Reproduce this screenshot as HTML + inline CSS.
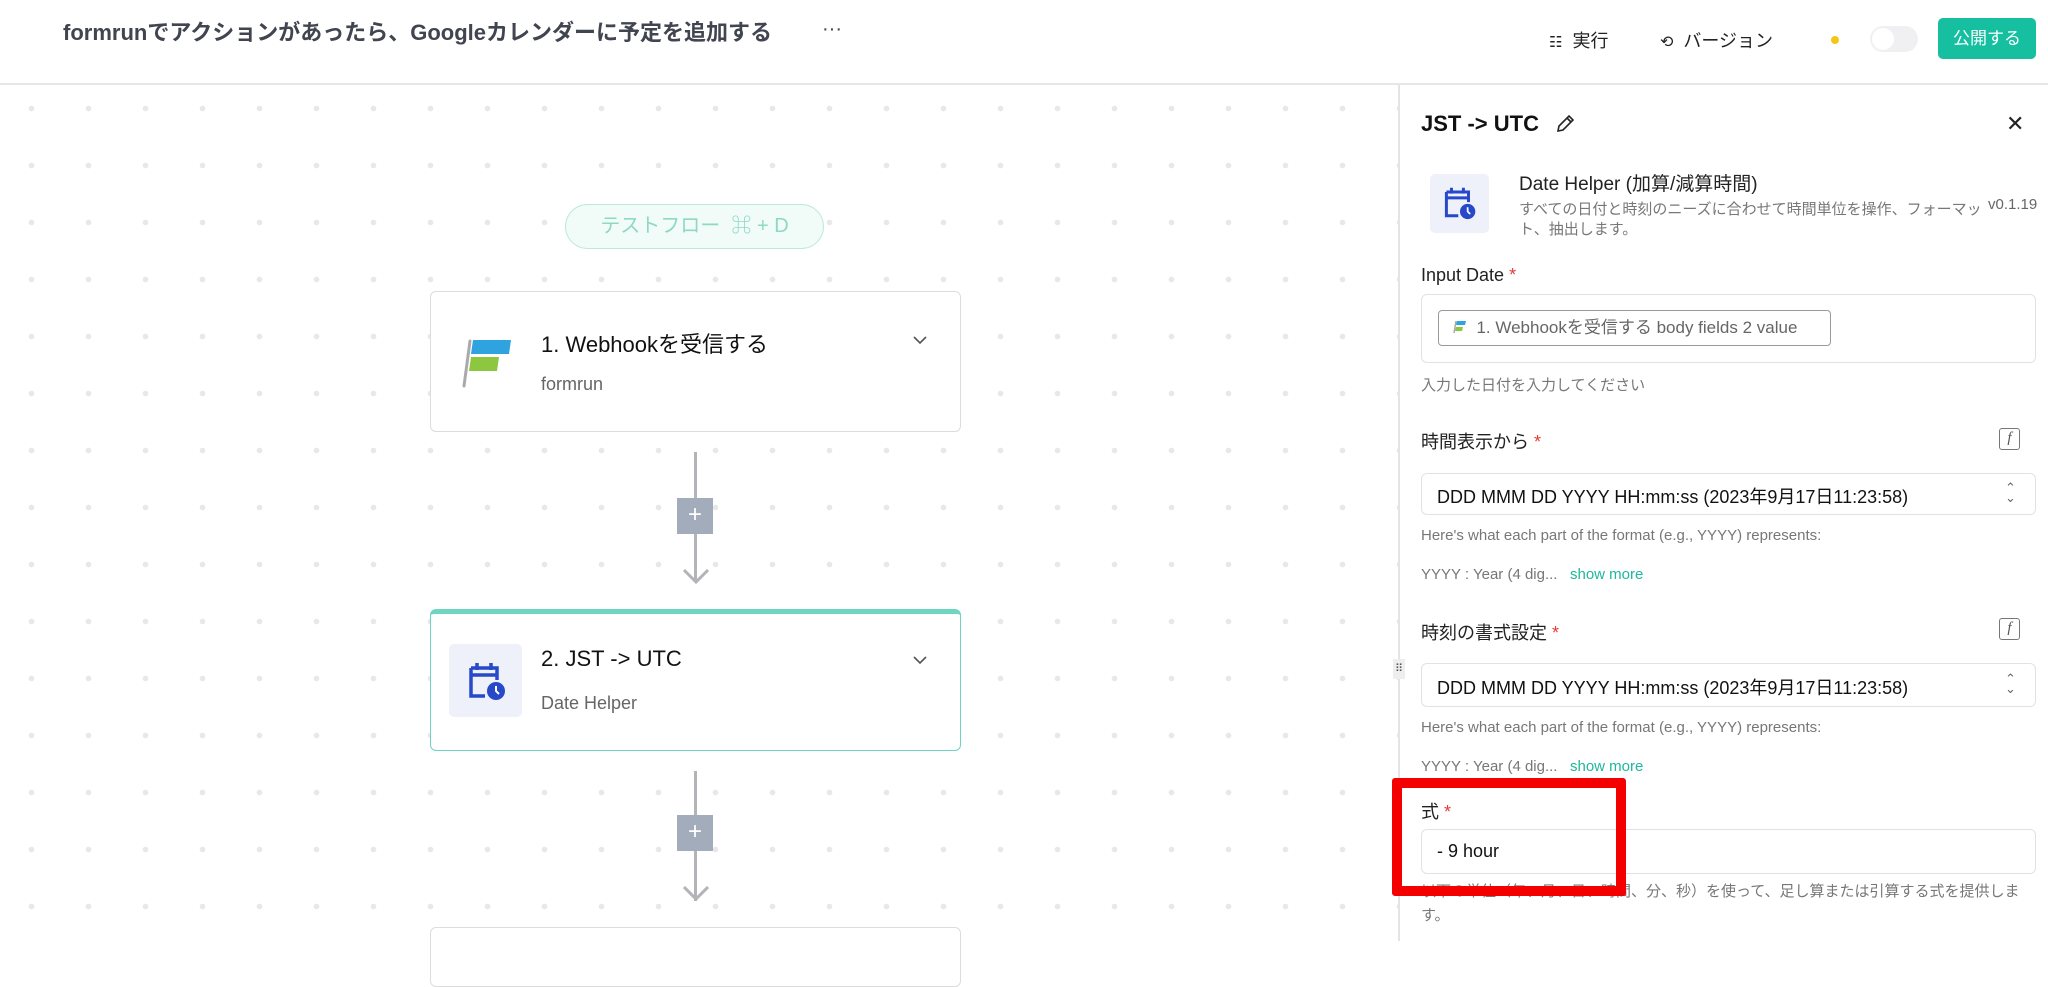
<!DOCTYPE html>
<html><head><meta charset="utf-8"><style>
*{box-sizing:border-box;margin:0;padding:0}
body{width:2048px;height:941px;overflow:hidden;background:#fff;font-family:"Liberation Sans","Noto Sans CJK JP",sans-serif;position:relative;color:#222}
.a{position:absolute;white-space:nowrap}
#canvas{position:absolute;left:0;top:85px;width:1399px;height:856px;background-color:#fff;background-image:radial-gradient(circle,#e8e8e8 2.6px,transparent 3px);background-size:57px 57px;background-position:3px -5px}
.card{position:absolute;left:430px;width:531px;background:#fff;border:1.5px solid #dcdcdc;border-radius:6px}
.req{color:#e53935}
.lbl{font-size:18px;color:#222}
.box{position:absolute;left:1421px;width:615px;border:1.5px solid #e2e2e2;border-radius:6px;background:#fff}
.help{font-size:15px;color:#777}
.sm{color:#1fb89a}
.fi{position:absolute;left:1999px;width:21px;height:22px;border:1.5px solid #777;border-radius:3px;font-size:15px;color:#555;text-align:center;line-height:19px;font-style:italic;font-family:"Liberation Serif",serif}
</style></head><body>
<div class="a" style="left:0;top:0;width:2048px;height:85px;border-bottom:2px solid #e6e6e6;background:#fff"></div>
<div class="a" style="left:63px;top:15px;font-size:22px;color:#40454f;font-weight:bold">formrunでアクションがあったら、Googleカレンダーに予定を追加する</div>
<div class="a" style="left:822px;top:18px;font-size:20px;color:#444">···</div>
<div class="a" style="left:1549px;top:27px;font-size:18px;color:#222"><span style="font-size:15px">☷</span>&nbsp; 実行</div>
<div class="a" style="left:1660px;top:27px;font-size:18px;color:#222"><span style="font-size:16px">⟲</span>&nbsp; バージョン</div>
<div class="a" style="left:1831px;top:36px;width:8px;height:8px;border-radius:50%;background:#f5c518"></div>
<div class="a" style="left:1870px;top:26px;width:48px;height:26px;border-radius:13px;background:#f0f0f2"></div>
<div class="a" style="left:1872px;top:28px;width:22px;height:22px;border-radius:50%;background:#fff"></div>
<div class="a" style="left:1938px;top:18px;width:98px;height:41px;border-radius:5px;background:#15bfa0;color:#fff;font-size:17px;text-align:center;line-height:41px">公開する</div>

<div id="canvas"></div>
<div class="a" style="left:565px;top:204px;width:259px;height:45px;border-radius:23px;background:#f1fbf8;border:1.5px solid #bce9de;color:#8ed8c5;font-size:20px;text-align:center;line-height:42px">テストフロー &nbsp;⌘ + D</div>

<div class="card" style="top:291px;height:141px">
 <svg style="position:absolute;left:30px;top:46px" width="52" height="50" viewBox="0 0 52 50"><path d="M9 3 L3 48" stroke="#aaa" stroke-width="3" stroke-linecap="round"/><path d="M12 2 H50 L48 16 H10 Z" fill="#2ea3e0"/><path d="M10 19 H38 L36 33 H8 Z" fill="#8dc63f"/></svg>
 <div class="a" style="left:110px;top:35px;font-size:22px;color:#111">1. Webhookを受信する</div>
 <div class="a" style="left:110px;top:82px;font-size:18px;color:#666">formrun</div>
 <svg style="position:absolute;left:481px;top:42px" width="16" height="12"><path d="M2 3 L8 9 L14 3" fill="none" stroke="#555" stroke-width="1.6"/></svg>
</div>
<div class="a" style="left:694px;top:452px;width:3px;height:128px;background:#b3b3b8"></div>
<svg class="a" style="left:681px;top:565px" width="30" height="24"><path d="M3 5 L15 17 L27 5" fill="none" stroke="#b3b3b8" stroke-width="3"/></svg>
<div class="a" style="left:677px;top:498px;width:36px;height:36px;background:#a3acba;color:#fff;text-align:center;line-height:34px;font-size:24px">+</div>

<div class="card" style="top:609px;height:142px;border:1.5px solid #6dd5c0;border-top:5px solid #6dd5c0">
 <div class="a" style="left:18px;top:30px;width:73px;height:73px;background:#eef0fa;border-radius:5px"></div>
 <svg class="a" style="left:36px;top:46px" width="40" height="42" viewBox="0 0 40 42"><path d="M4 8 H30 V20 M4 8 V36 H18 M4 15 H30 M10 3 V10 M24 3 V10" fill="none" stroke="#2749c9" stroke-width="3.5"/><circle cx="29" cy="31" r="9" fill="#2749c9"/><path d="M29 26 V31 L32 34" stroke="#fff" stroke-width="2" fill="none"/></svg>
 <div class="a" style="left:110px;top:32px;font-size:22px;color:#111">2. JST -&gt; UTC</div>
 <div class="a" style="left:110px;top:79px;font-size:18px;color:#666">Date Helper</div>
 <svg style="position:absolute;left:481px;top:40px" width="16" height="12"><path d="M2 3 L8 9 L14 3" fill="none" stroke="#555" stroke-width="1.6"/></svg>
</div>
<div class="a" style="left:694px;top:771px;width:3px;height:130px;background:#b3b3b8"></div>
<svg class="a" style="left:681px;top:882px" width="30" height="24"><path d="M3 5 L15 17 L27 5" fill="none" stroke="#b3b3b8" stroke-width="3"/></svg>
<div class="a" style="left:677px;top:815px;width:36px;height:36px;background:#a3acba;color:#fff;text-align:center;line-height:34px;font-size:24px">+</div>
<div class="card" style="top:927px;height:60px"></div>

<div class="a" style="left:1398px;top:85px;width:650px;height:856px;background:#fff;border-left:2px solid #e4e4e4"></div>
<div class="a" style="left:1393px;top:659px;width:12px;height:20px;background:#eee;font-size:11px;color:#555;text-align:center;line-height:20px">⠿</div>
<div class="a" style="left:1421px;top:111px;font-size:22px;font-weight:bold;color:#111">JST -&gt; UTC</div>
<svg class="a" style="left:1555px;top:114px" width="20" height="20" viewBox="0 0 20 20"><path d="M3 17 L4 12 L14 2 L18 6 L8 16 Z M12 4 L16 8" fill="none" stroke="#222" stroke-width="1.6"/></svg>
<div class="a" style="left:2006px;top:111px;font-size:22px;color:#222">✕</div>
<div class="a" style="left:1430px;top:174px;width:59px;height:59px;background:#eef0fa;border-radius:5px"></div>
<svg class="a" style="left:1443px;top:185px" width="34" height="36" viewBox="0 0 40 42"><path d="M4 8 H30 V20 M4 8 V36 H18 M4 15 H30 M10 3 V10 M24 3 V10" fill="none" stroke="#2749c9" stroke-width="3.5"/><circle cx="29" cy="31" r="9" fill="#2749c9"/><path d="M29 26 V31 L32 34" stroke="#fff" stroke-width="2" fill="none"/></svg>
<div class="a" style="left:1519px;top:169px;font-size:19px;color:#222">Date Helper (加算/減算時間)</div>
<div class="a" style="left:1519px;top:200px;font-size:15px;color:#777;line-height:20px">すべての日付と時刻のニーズに合わせて時間単位を操作、フォーマッ<br>ト、抽出します。</div>
<div class="a" style="left:1988px;top:196px;font-size:15px;color:#666">v0.1.19</div>

<div class="a lbl" style="left:1421px;top:265px">Input Date <span class="req">*</span></div>
<div class="box" style="top:294px;height:69px"></div>
<div class="a" style="left:1438px;top:310px;width:393px;height:36px;border:1.5px solid #9a9a9a;border-radius:4px;font-size:17px;color:#666;line-height:33px;padding-left:14px"><svg width="14" height="14" style="vertical-align:-1px" viewBox="0 0 14 14"><path d="M3 1 L1 13" stroke="#aaa" stroke-width="1.5"/><path d="M4 1 H13 L12 5 H3 Z" fill="#2ea3e0"/><path d="M3 7 H10 L9 11 H2 Z" fill="#8dc63f"/></svg>&nbsp; 1. Webhookを受信する body fields 2 value</div>
<div class="a help" style="left:1421px;top:374px">入力した日付を入力してください</div>

<div class="a lbl" style="left:1421px;top:428px">時間表示から <span class="req">*</span></div>
<div class="fi" style="top:428px">f</div>
<div class="box" style="top:473px;height:42px"></div>
<div class="a" style="left:1437px;top:483px;font-size:18px;color:#111">DDD MMM DD YYYY HH:mm:ss (2023年9月17日11:23:58)</div>
<div class="a" style="left:2005px;top:483px;font-size:13px;color:#666;line-height:10px;text-align:center">⌃<br>⌄</div>
<div class="a help" style="left:1421px;top:527px">Here's what each part of the format (e.g., YYYY) represents:</div>
<div class="a help" style="left:1421px;top:566px">YYYY : Year (4 dig... &nbsp;&nbsp;<span class="sm">show more</span></div>

<div class="a lbl" style="left:1421px;top:619px">時刻の書式設定 <span class="req">*</span></div>
<div class="fi" style="top:618px">f</div>
<div class="box" style="top:663px;height:44px"></div>
<div class="a" style="left:1437px;top:674px;font-size:18px;color:#111">DDD MMM DD YYYY HH:mm:ss (2023年9月17日11:23:58)</div>
<div class="a" style="left:2005px;top:674px;font-size:13px;color:#666;line-height:10px;text-align:center">⌃<br>⌄</div>
<div class="a help" style="left:1421px;top:719px">Here's what each part of the format (e.g., YYYY) represents:</div>
<div class="a help" style="left:1421px;top:758px">YYYY : Year (4 dig... &nbsp;&nbsp;<span class="sm">show more</span></div>

<div class="a lbl" style="left:1421px;top:798px">式 <span class="req">*</span></div>
<div class="box" style="top:829px;height:45px"></div>
<div class="a" style="left:1437px;top:841px;font-size:18px;color:#111">- 9 hour</div>
<div class="a help" style="left:1421px;top:880px;line-height:24px">以下の単位（年、月、日、時間、分、秒）を使って、足し算または引算する式を提供しま<br>す。</div>
<div class="a" style="left:1392px;top:778px;width:234px;height:118px;border:10px solid #f50000;border-radius:3px"></div>
</body></html>
